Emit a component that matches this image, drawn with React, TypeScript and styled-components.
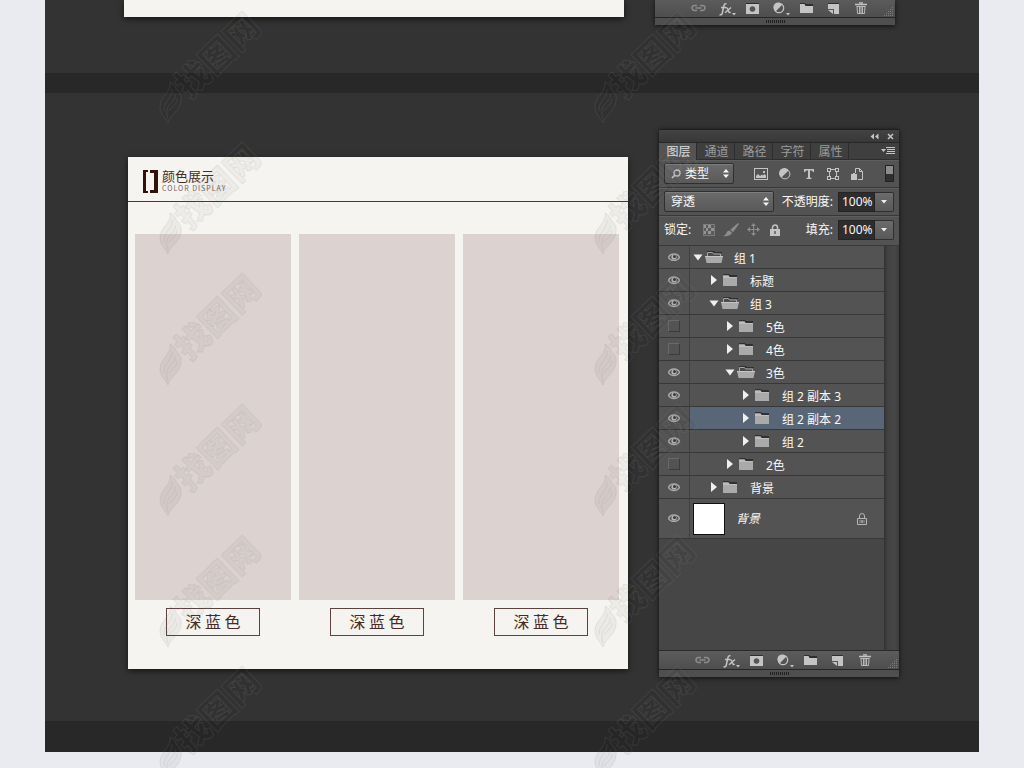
import React from "react";
import styled, { createGlobalStyle } from "styled-components";

const GlobalStyle = createGlobalStyle`
  *, *::before, *::after { box-sizing: border-box; }
  body {
    margin: 0;
    background: #e9ebf0;
    font-family: "Noto Sans", "Noto Sans CJK SC", sans-serif;
    font-size: 12px;
    line-height: 16px;
  }
  button, input, select { font: inherit; color: inherit; margin: 0; padding: 0; border: 0; background: none; border-radius: 0; outline-offset: -1px; }
  svg { display: block; flex: none; }
`;

/* ---------- page ---------- */

const Page = styled.div`
  position: relative;
  min-height: 100vh;
  padding: 0 45px 16px;
  overflow: hidden;
`;

const Sheet = styled.main`
  background: #333333;
`;

const Band = styled.div<{ $size: number }>`
  height: ${(p) => p.$size}px;
  background: #282828;
`;

const PreviousSection = styled.section`
  display: flex;
  align-items: flex-start;
  gap: 31px;
  height: 73px;
  padding: 0 84px 0 79px;
`;

const Section = styled.section`
  display: flex;
  align-items: flex-start;
  gap: 31px;
  padding: 36px 80px 44px 83px;
`;

const CardEnd = styled.div`
  flex: 1;
  height: 17px;
  background: #f5f4f0;
  box-shadow: 0 2px 6px rgba(0, 0, 0, 0.6);
`;

/* ---------- colour card ---------- */

const Card = styled.article`
  flex: 1;
  margin-top: 28px;
  padding-bottom: 33px;
  background: #f5f4f0;
  box-shadow: 0 2px 6px rgba(0, 0, 0, 0.6);
  color: #4a2a26;
  font-family: "Noto Sans CJK SC", sans-serif;
`;

const CardHeader = styled.header`
  display: flex;
  align-items: center;
  gap: 4px;
  height: 45px;
  padding: 4px 15px 0;
  border-bottom: 1px solid #4e3531;
`;

const CardTitle = styled.h2`
  margin: 0 0 1px;
  font-size: 13px;
  line-height: 14px;
  font-weight: 400;
`;

const CardSubtitle = styled.p`
  margin: 0;
  font-size: 7px;
  line-height: 9px;
  letter-spacing: 1px;
  color: #75615e;
`;

const Swatches = styled.ul`
  display: grid;
  grid-template-columns: repeat(3, 1fr);
  gap: 8px;
  margin: 0;
  padding: 32px 9px 0 7px;
  list-style: none;
`;

const SwatchItem = styled.li`
  display: flex;
  flex-direction: column;
  align-items: center;
  gap: 8px;
`;

const SwatchColor = styled.div`
  width: 100%;
  height: 366px;
  background: #dcd2d0;
`;

const SwatchName = styled.span`
  width: 94px;
  height: 28px;
  border: 1px solid #5f423e;
  font-size: 16px;
  line-height: 25px;
  text-align: center;
`;

/* ---------- layers panel ---------- */

const PanelBox = styled.aside`
  flex: none;
  width: 240px;
  background: #535353;
  color: #f8f8f8;
  box-shadow: 0 1px 5px rgba(0, 0, 0, 0.7);
`;

const TitleBar = styled.div`
  display: flex;
  align-items: center;
  justify-content: flex-end;
  gap: 8px;
  height: 14px;
  padding: 1px 5px 0;
  border-top: 1px solid #1e1e1e;
  border-bottom: 1px solid #272727;
  background: linear-gradient(#434343, #383838);
`;

const IconButton = styled.button<{ $dim?: boolean }>`
  display: flex;
  align-items: center;
  justify-content: center;
  color: ${(p) => (p.$dim ? "#8c8c8c" : "#c4c4c4")};
  cursor: pointer;
`;

const TabBar = styled.div`
  display: flex;
  height: 17px;
  background: #3f3f3f;
  border-bottom: 1px solid #2d2d2d;
`;

const Tab = styled.button<{ $active?: boolean }>`
  width: 38px;
  height: ${(p) => (p.$active ? 17 : 16)}px;
  padding: 1px 0 0 2px;
  border-right: 1px solid #2d2d2d;
  background: ${(p) => (p.$active ? "#535353" : "transparent")};
  color: ${(p) => (p.$active ? "#e4e4e4" : "#9c9c9c")};
  line-height: 16px;
`;

const TabMenu = styled(IconButton)`
  margin: 0 4px 0 auto;
`;

const Controls = styled.div<{ $tall?: boolean }>`
  display: flex;
  align-items: center;
  height: ${(p) => (p.$tall ? 30 : 28)}px;
  padding: 0 5px ${(p) => (p.$tall ? 2 : 0)}px 5px;
  border-bottom: 1px solid #383838;
  box-shadow: inset 0 1px 0 #5e5e5e;
`;

const SelectBox = styled.label<{ $width: number }>`
  display: flex;
  align-items: center;
  width: ${(p) => p.$width}px;
  height: 21px;
  padding: 0 4px 0 6px;
  border: 1px solid #2f2f2f;
  border-radius: 2px;
  background: linear-gradient(#6b6b6b, #595959);
  box-shadow: inset 0 1px 0 #7d7d7d;
`;

const Select = styled.select`
  flex: 1;
  min-width: 0;
  height: 18px;
  appearance: none;
  option { color: #222; }
`;

const FilterSelect = styled(Select)`
  margin-left: 4px;
`;

const FilterIcons = styled.div`
  display: flex;
  flex: 1;
  align-items: center;
  gap: 8px;
  padding-left: 19px;
  ${IconButton} { width: 16px; height: 16px; }
`;

const FilterToggle = styled.input`
  appearance: none;
  width: 9px;
  height: 17px;
  border: 1px solid #222;
  background: linear-gradient(#8c8c8c 0 8px, #303030 8px);
`;

const FieldLabel = styled.label`
  margin-left: auto;
  padding-right: 5px;
  white-space: nowrap;
`;

const Percent = styled.input`
  width: 37px;
  height: 20px;
  padding-left: 3px;
  border: 1px solid #242424;
  background: #2d2d2d;
`;

const DropButton = styled(IconButton)`
  width: 19px;
  height: 20px;
  border: 1px solid #2f2f2f;
  border-left: 0;
  border-radius: 0 2px 2px 0;
  background: linear-gradient(#6b6b6b, #595959);
`;

const LockIcons = styled.div`
  display: flex;
  align-items: center;
  gap: 6px;
  padding-left: 10px;
  ${IconButton} { width: 16px; height: 16px; }
`;

const LayerArea = styled.div`
  min-height: 404px;
  padding-right: 15px;
  background: linear-gradient(90deg, #323232, #434343 4px, #474747 11px, #3c3c3c) right / 15px 100% no-repeat #464646;
`;

const LayerList = styled.ul`
  margin: 0;
  padding: 0;
  list-style: none;
`;

const LayerRow = styled.li<{ $tall?: boolean }>`
  display: flex;
  height: ${(p) => (p.$tall ? 40 : 23)}px;
  border-bottom: 1px solid #383838;
  background: #535353;
`;

const EyeCell = styled.div`
  display: flex;
  flex: none;
  align-items: center;
  justify-content: center;
  width: 31px;
  padding-bottom: 1px;
  border-right: 1px solid #404040;
`;

const HiddenBox = styled.button`
  width: 12px;
  height: 12px;
  border: 1px solid #696969;
  border-right-color: #3b3b3b;
  border-bottom-color: #3b3b3b;
`;

const LayerBody = styled.div<{ $depth: number; $selected?: boolean }>`
  display: flex;
  flex: 1;
  align-items: center;
  padding-left: ${(p) => 2 + p.$depth * 16}px;
  background: ${(p) => (p.$selected ? "#596678" : "transparent")};
`;

const LayerName = styled.span`
  margin-left: 11px;
  padding-top: 3px;
  white-space: pre;
`;

const Disclosure = styled(IconButton)`
  width: 12px;
  height: 16px;
  margin-right: 1px;
  color: #f0f0f0;
`;

const Thumbnail = styled.div`
  width: 32px;
  height: 32px;
  margin-left: 1px;
  border: 1px solid #111;
  background: #fff;
`;

const BackgroundName = styled.em`
  flex: 1;
  margin-left: 11px;
`;

const LockMark = styled.span`
  margin-right: 17px;
  color: #b5b5b5;
`;

const Footer = styled.div`
  display: grid;
  grid-template-columns: repeat(7, 27px) 1fr;
  justify-items: center;
  align-items: center;
  height: 20px;
  padding: 0 1px 0 30px;
  border-top: 1px solid #2a2a2a;
  border-bottom: 1px solid #262626;
  background: linear-gradient(#5c5c5c, #4e4e4e);
`;

const FooterClip = styled.div`
  margin-top: -2px;
`;

const ResizeCorner = styled.span`
  justify-self: end;
  align-self: end;
  color: #7d7d7d;
`;

const Grip = styled.div`
  display: flex;
  justify-content: center;
  height: 7px;
  padding-top: 2px;
  background: #4f4f4f;
`;

const GripDots = styled.span`
  width: 19px;
  height: 3px;
  background: repeating-linear-gradient(90deg, #202020 0 1px, transparent 1px 2px);
`;

/* ---------- icons ---------- */

type IconProps = { w: number; h: number; children: React.ReactNode };
const Icon = ({ w, h, children }: IconProps) => (
  <svg width={w} height={h} viewBox={`0 0 ${w} ${h}`} fill="currentColor" aria-hidden="true">
    {children}
  </svg>
);

const CollapseIcon = () => (
  <Icon w={9} h={7}><path d="M4 0.5v6L0.5 3.5zM8.5 0.5v6L5 3.5z" /></Icon>
);
const CloseIcon = () => (
  <Icon w={7} h={7}><path d="M1 1l5 5M6 1L1 6" stroke="currentColor" strokeWidth="1.5" /></Icon>
);
const MenuIcon = () => (
  <Icon w={14} h={8}><path d="M0 2h5L2.5 5zM5 0h9v1H5zM6 2h8v1H6zM6 4h8v1H6zM5 6h9v1H5z" /></Icon>
);
const SearchIcon = () => (
  <Icon w={10} h={10}>
    <path d="M4 6L1 9" stroke="#c8c8c8" strokeWidth="1.7" />
    <circle cx="6" cy="4" r="3" fill="none" stroke="#c8c8c8" strokeWidth="1.3" />
  </Icon>
);
const UpDownIcon = () => (
  <Icon w={6} h={9}><path d="M3 0l3 3.5H0zM3 9l3-3.5H0z" /></Icon>
);
const DownIcon = () => (
  <Icon w={6} h={4}><path d="M0 0h6L3 3.5z" fill="#eee" /></Icon>
);
const PictureIcon = () => (
  <Icon w={14} h={12}>
    <path fillRule="evenodd" d="M0 0h14v12H0zM1 1v10h12V1z" />
    <path d="M2 10V8l2-2 2 2 2-1.500 1 1L10.500 6 12 7.500V10zM9 3h2v2H9z" />
  </Icon>
);
const AdjustIcon = () => (
  <Icon w={12} h={12}>
    <circle cx="6" cy="6" r="4.9" fill="none" stroke="currentColor" strokeWidth="1" />
    <path d="M9.6 2.4A5.2 5.2 0 1 0 2.4 9.6z" />
  </Icon>
);
const TypeIcon = () => (
  <Icon w={10} h={10}><path d="M0 0h10v3H9L8 1.4H6V8.6l1.5.5V10h-5V9.1l1.500-.5V1.400H2L1 3H0z" /></Icon>
);
const ShapeIcon = () => (
  <Icon w={12} h={12}>
    <path d="M2.5 3v6M9.5 3v6M3 1.5h6M3 10.500h6" stroke="currentColor" />
    <path fillRule="evenodd" d="M0 0h4v4H0zM1 1v2h2V1zM8 0h4v4H8zM9 1v2h2V1zM0 8h4v4H0zM1 9v2h2V9zM8 8h4v4H8zM9 9v2h2V9z" />
  </Icon>
);
const SmartIcon = () => (
  <Icon w={12} h={12}>
    <path d="M4.5 5V.5h4l3 3v8H7M8.5.5v3h3" fill="none" stroke="currentColor" />
    <path d="M0 6h6v6H0zM2 5h2v1H2z" />
  </Icon>
);
const CheckerIcon = () => (
  <Icon w={12} h={12}>
    <path fill="#7c7c7c" d="M0 0h12v12H0z" />
    <path fill="#5b5b5b" d="M1 1h10v10H1z" />
    <path fill="#949494" d="M1 1h2v3H1zM5 1h3v3H5zM3 4h2v3H3zM8 4h3v3H8zM1 7h2v3H1zM5 7h3v3H5z" />
  </Icon>
);
const BrushIcon = () => (
  <Icon w={16} h={14}>
    <path d="M15 0l1 1L10 9.200 7.300 6.800zM6.500 7.500L9 9.800C8 12.800 4 13.700 0 13c2-.8 3-1.500 3.400-3 .4-1.500 1.600-2.500 3.100-2.500z" />
  </Icon>
);
const MoveIcon = () => (
  <Icon w={13} h={13}>
    <path d="M6.5 2v9M2 6.5h9" stroke="currentColor" />
    <path d="M6.5 0L9 3H4zM6.5 13L9 10H4zM0 6.500L3 4v5zM13 6.500L10 4v5z" />
  </Icon>
);
const LockIcon = () => (
  <Icon w={10} h={12}>
    <path d="M2.5 6V3.500a2.500 2.500 0 0 1 5 0V6" fill="none" stroke="currentColor" strokeWidth="1.5" />
    <path fillRule="evenodd" d="M0 5h10v7H0zM4.300 7v3h1.400V7z" />
  </Icon>
);
const LockOutlineIcon = () => (
  <Icon w={10} h={12}>
    <path d="M2.5 5V3a2.500 2.500 0 0 1 5 0v2M.5 5.500h9v6h-9z" fill="none" stroke="currentColor" />
    <path d="M2 7h6v3H2z" opacity=".35" />
    <path d="M4.500 7h1v3h-1z" />
  </Icon>
);
const EyeIcon = () => (
  <Icon w={12} h={10}>
    <path d="M.5 5.500C2 .8 10 .8 11.500 5.500 9.500 9.400 2.500 9.400.5 5.500z" fill="none" stroke="#a9a9a9" strokeWidth="1.4" />
    <circle cx="6" cy="5" r="2.600" fill="#b4b4b4" />
    <circle cx="6.500" cy="4.500" r="1.500" fill="#383838" />
  </Icon>
);
const OpenArrow = () => (
  <Icon w={10} h={7}><path d="M0.5 0.5h9L5 6.500z" /></Icon>
);
const ClosedArrow = () => (
  <Icon w={7} h={10}><path d="M0 0L6 5 0 10z" /></Icon>
);
const FolderIcon = () => (
  <Icon w={18} h={12}>
    <path fill="#303030" d="M2 0h6l1 1h7v2H2z" />
    <path fill="#aaaaaa" d="M2 1.500h5.500L8.500 3H16v9H2z" />
    <path fill="#bdbdbd" d="M2 1.500h5.500L8.500 3H16v1H2z" />
  </Icon>
);
const FolderOpenIcon = () => (
  <Icon w={18} h={12}>
    <path fill="#303030" d="M2 0h7l1 1h7v1H2z" />
    <path d="M2.500 6V1.500h5l1 1.500h7v3" fill="#4a4a4a" stroke="#a5a5a5" />
    <path fill="#aaaaaa" d="M0 5h18l-1.500 7h-15z" />
    <path fill="#c6c6c6" d="M0 5h18v1H0z" />
  </Icon>
);
const LinkIcon = () => (
  <Icon w={15} h={8}>
    <path d="M6 1.500H3.500a2.500 2.500 0 0 0 0 5H6M9 1.500h2.500a2.500 2.500 0 0 1 0 5H9M4.500 4h6" fill="none" stroke="currentColor" strokeWidth="1.5" />
  </Icon>
);
const FxIcon = () => (
  <Icon w={21} h={15}>
    <g transform="translate(4 2)">
      <path d="M7.500.9C5.500.3 5 2 4.700 3.500L3.300 10c-.3 1.500-1.200 2.200-2.800 1.700M2 4.500h5" fill="none" stroke="currentColor" strokeWidth="1.5" />
      <path d="M6.500 4.700c2-.5 2.200.5 2.700 2.300.5 2 1 3 2.500 2.200M12 4.500L6 9.700" fill="none" stroke="currentColor" strokeWidth="1.4" />
      <path d="M13 10h4l-2 2.500z" />
    </g>
  </Icon>
);
const MaskIcon = () => (
  <Icon w={13} h={11}>
    <path fill="#2e2e2e" d="M0 0h13v1H0z" />
    <path fillRule="evenodd" d="M0 1h13v10H0zM6.500 3.200a2.800 2.800 0 1 0 .01 0z" />
  </Icon>
);
const AdjustMenuIcon = () => (
  <Icon w={21} h={15}>
    <g transform="translate(4 2)">
      <circle cx="6" cy="5" r="4.700" fill="none" stroke="currentColor" strokeWidth="1.2" />
      <path d="M9.400 1.600A4.900 4.900 0 1 0 2.600 8.400z" />
      <path d="M13 10h4l-2 2.500z" />
    </g>
  </Icon>
);
const GroupIcon = () => (
  <Icon w={13} h={11}>
    <path fill="#2e2e2e" d="M0 0h5l1 1h7v2H0z" />
    <path d="M0 1h4.500l1 2H13v7H0z" />
  </Icon>
);
const NewLayerIcon = () => (
  <Icon w={11} h={11}>
    <path fill="#2e2e2e" d="M0 0h11v1H0z" />
    <path d="M0 1h11v10H6V6H0zM0 7h5v4z" />
  </Icon>
);
const TrashIcon = () => (
  <Icon w={12} h={12}>
    <path d="M4 .8h4M0 2.500h12" stroke="currentColor" strokeWidth="1.3" />
    <path d="M1.500 4.500h9M2 4.500l.5 7h7l.5-7M4.500 5v6M6 5v6M7.500 5v6" fill="none" stroke="currentColor" strokeWidth="0.9" />
  </Icon>
);
const CornerIcon = () => (
  <Icon w={10} h={10}>
    <path d="M8 0h1v1H8zM6 2h1v1H6zM8 2h1v1H8zM4 4h1v1H4zM6 4h1v1H6zM8 4h1v1H8zM2 6h1v1H2zM4 6h1v1H4zM6 6h1v1H6zM8 6h1v1H8zM0 8h1v1H0zM2 8h1v1H2zM4 8h1v1H4zM6 8h1v1H6zM8 8h1v1H8z" />
  </Icon>
);
const BracketLogo = () => (
  <svg width="15" height="23" viewBox="0 0 15 23" fill="#32120d" aria-hidden="true">
    <path d="M0 0h5v2H3v19h2v2H0zM7 0h8v23H7v-3h4V3H7z" />
  </svg>
);

/* ---------- watermark ---------- */

const MarkLayer = styled.div`
  position: absolute;
  inset: 0;
  display: grid;
  grid-template-columns: repeat(2, 435px);
  grid-auto-rows: 131px;
  padding: 8px 0 0 158px;
  overflow: hidden;
  pointer-events: none;
`;

const MarkDrawing = styled.svg`
  overflow: visible;
`;

const Watermark = () => (
  <MarkDrawing width="108" height="120" viewBox="0 0 108 120" aria-hidden="true">
    <g fill="#000" fillOpacity="0.04" stroke="#8c8c8c" strokeOpacity="0.17">
      <text
        x="58"
        y="46"
        transform="rotate(-44 58 46)"
        textAnchor="middle"
        dominantBaseline="central"
        fontFamily="'Noto Sans CJK SC', sans-serif"
        fontSize="34"
        fontWeight="900"
      >
        找图网
      </text>
      <path d="M12 74C14 84 2 88 2 99c0 7 5 10 8 16 1-7 12-12 13-22 1-6-2-9-5-12 0-3-3-5-6-7z" />
      <path fill="none" d="M14 81c1 9-9 12-8 22M17 86c2 6-7 9-8 16-.6 3 0 6 1 9M19 91c0 6-5 7-8 12" />
    </g>
  </MarkDrawing>
);

/* ---------- composed parts ---------- */

const PanelFooter = () => (
  <>
    <Footer>
      <IconButton $dim aria-label="链接图层"><LinkIcon /></IconButton>
      <IconButton aria-label="图层样式"><FxIcon /></IconButton>
      <IconButton aria-label="图层蒙版"><MaskIcon /></IconButton>
      <IconButton aria-label="调整图层"><AdjustMenuIcon /></IconButton>
      <IconButton aria-label="新建组"><GroupIcon /></IconButton>
      <IconButton aria-label="新建图层"><NewLayerIcon /></IconButton>
      <IconButton aria-label="删除图层"><TrashIcon /></IconButton>
      <ResizeCorner><CornerIcon /></ResizeCorner>
    </Footer>
    <Grip><GripDots /></Grip>
  </>
);

type Layer = { name: string; depth: number; open?: boolean; hidden?: boolean; selected?: boolean };

const layers: Layer[] = [
  { name: "组 1", depth: 0, open: true },
  { name: "标题", depth: 1 },
  { name: "组 3", depth: 1, open: true },
  { name: "5色", depth: 2, hidden: true },
  { name: "4色", depth: 2, hidden: true },
  { name: "3色", depth: 2, open: true },
  { name: "组 2 副本 3", depth: 3 },
  { name: "组 2 副本 2", depth: 3, selected: true },
  { name: "组 2", depth: 3 },
  { name: "2色", depth: 2, hidden: true },
  { name: "背景", depth: 1 },
];

const tabs = ["图层", "通道", "路径", "字符", "属性"];

const LayersPanel = () => (
  <PanelBox>
    <TitleBar>
      <IconButton aria-label="折叠"><CollapseIcon /></IconButton>
      <IconButton aria-label="关闭"><CloseIcon /></IconButton>
    </TitleBar>
    <TabBar role="tablist">
      {tabs.map((t, i) => (
        <Tab key={t} role="tab" aria-selected={i === 0} $active={i === 0}>{t}</Tab>
      ))}
      <TabMenu aria-label="面板菜单"><MenuIcon /></TabMenu>
    </TabBar>

    <Controls>
      <SelectBox $width={70}>
        <SearchIcon />
        <FilterSelect aria-label="滤镜类型"><option>类型</option></FilterSelect>
        <UpDownIcon />
      </SelectBox>
      <FilterIcons>
        <IconButton aria-label="像素图层"><PictureIcon /></IconButton>
        <IconButton aria-label="调整图层"><AdjustIcon /></IconButton>
        <IconButton aria-label="文字图层"><TypeIcon /></IconButton>
        <IconButton aria-label="形状图层"><ShapeIcon /></IconButton>
        <IconButton aria-label="智能对象"><SmartIcon /></IconButton>
      </FilterIcons>
      <FilterToggle type="checkbox" aria-label="图层过滤" />
    </Controls>

    <Controls>
      <SelectBox $width={110}>
        <Select aria-label="混合模式"><option>穿透</option></Select>
        <UpDownIcon />
      </SelectBox>
      <FieldLabel htmlFor="opacity">不透明度:</FieldLabel>
      <Percent id="opacity" defaultValue="100%" />
      <DropButton aria-label="调整不透明度"><DownIcon /></DropButton>
    </Controls>

    <Controls $tall>
      <span>锁定:</span>
      <LockIcons>
        <IconButton $dim aria-label="锁定透明像素"><CheckerIcon /></IconButton>
        <IconButton $dim aria-label="锁定图像像素"><BrushIcon /></IconButton>
        <IconButton $dim aria-label="锁定位置"><MoveIcon /></IconButton>
        <IconButton aria-label="锁定全部"><LockIcon /></IconButton>
      </LockIcons>
      <FieldLabel htmlFor="fill">填充:</FieldLabel>
      <Percent id="fill" defaultValue="100%" />
      <DropButton aria-label="调整填充"><DownIcon /></DropButton>
    </Controls>

    <LayerArea>
      <LayerList>
        {layers.map((l) => (
          <LayerRow key={l.name}>
            <EyeCell>
              {l.hidden ? (
                <HiddenBox aria-label="显示图层" />
              ) : (
                <IconButton aria-label="隐藏图层"><EyeIcon /></IconButton>
              )}
            </EyeCell>
            <LayerBody $depth={l.depth} $selected={l.selected}>
              <Disclosure aria-label={l.open ? "收起组" : "展开组"}>
                {l.open ? <OpenArrow /> : <ClosedArrow />}
              </Disclosure>
              {l.open ? <FolderOpenIcon /> : <FolderIcon />}
              <LayerName>{l.name}</LayerName>
            </LayerBody>
          </LayerRow>
        ))}
        <LayerRow $tall>
          <EyeCell>
            <IconButton aria-label="隐藏图层"><EyeIcon /></IconButton>
          </EyeCell>
          <LayerBody $depth={0}>
            <Thumbnail />
            <BackgroundName>背景</BackgroundName>
            <LockMark><LockOutlineIcon /></LockMark>
          </LayerBody>
        </LayerRow>
      </LayerList>
    </LayerArea>
    <PanelFooter />
  </PanelBox>
);

export default function App() {
  return (
    <Page>
      <GlobalStyle />
      <Sheet>
        <PreviousSection>
          <CardEnd />
          <PanelBox>
            <FooterClip><PanelFooter /></FooterClip>
          </PanelBox>
        </PreviousSection>
        <Band $size={20} />
        <Section>
          <Card>
            <CardHeader>
              <BracketLogo />
              <div>
                <CardTitle>颜色展示</CardTitle>
                <CardSubtitle>COLOR DISPLAY</CardSubtitle>
              </div>
            </CardHeader>
            <Swatches>
              {[0, 1, 2].map((i) => (
                <SwatchItem key={i}>
                  <SwatchColor />
                  <SwatchName>深 蓝 色</SwatchName>
                </SwatchItem>
              ))}
            </Swatches>
          </Card>
          <LayersPanel />
        </Section>
        <Band $size={31} />
      </Sheet>
      <MarkLayer>
        {Array.from({ length: 12 }, (_, i) => (
          <Watermark key={i} />
        ))}
      </MarkLayer>
    </Page>
  );
}
